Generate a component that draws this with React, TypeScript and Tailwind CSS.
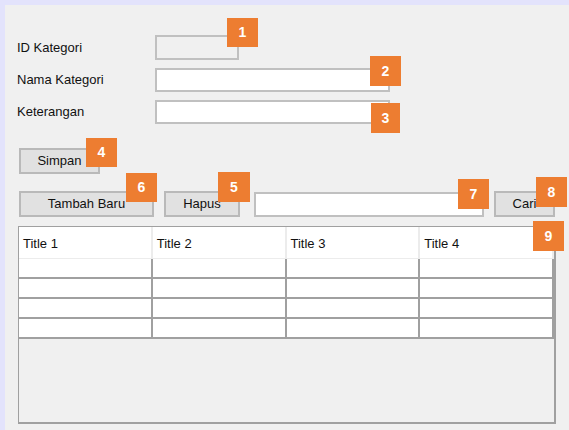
const font = { fontFamily: '"Liberation Sans", Arial, sans-serif' }

type Badge = { n: string; cls: string }

// annotation markers that sit on top of the form
const badges: Badge[] = [
    { n: '1', cls: 'left-[222px] top-[13px] w-[31px] h-[29px]' },
    { n: '2', cls: 'left-[365px] top-[51px] w-[31px] h-[30px]' },
    { n: '3', cls: 'left-[366px] top-[98px] w-[29px] h-[30px]' },
    { n: '4', cls: 'left-[81px] top-[133px] w-[31px] h-[29px]' },
    { n: '5', cls: 'left-[213px] top-[167px] w-[32px] h-[30px]' },
    { n: '6', cls: 'left-[121px] top-[168px] w-[31px] h-[29px]' },
    { n: '7', cls: 'left-[453px] top-[174px] w-[31px] h-[30px]' },
    { n: '8', cls: 'left-[531px] top-[172px] w-[31px] h-[30px]' },
    { n: '9', cls: 'left-[528px] top-[216px] w-[31px] h-[30px]' },
]

const titles = ['Title 1', 'Title 2', 'Title 3', 'Title 4']

function Button({ label, className }: { label: string; className: string }) {
    return (
        <button className={`border-2 border-[#b9b9b9] bg-[#e1e1e1] text-[13px] text-[#111] flex items-center justify-center ${className}`}>
            {label}
        </button>
    )
}

export default function App() {
    return (
        <div className="w-[569px] h-[430px] overflow-hidden bg-[#e3e3fc] pt-[5px] pl-[5px]" style={font}>
            <div className="relative w-full h-full bg-[#f0f0f0] pt-[30px] text-[#111]">
                <div className="grid grid-cols-[138px_auto] gap-y-[8px] pl-[12px] text-[13px]">
                    <div className="flex items-center h-[25px]">ID Kategori</div>
                    <div className="w-[84px] h-[25px] border-2 border-[#c0c0c0] bg-[#f0f0f0]" />
                    <div className="flex items-center h-[24px]">Nama Kategori</div>
                    <div className="w-[235px] h-[24px] border-2 border-[#c0c0c0] bg-white" />
                    <div className="flex items-center h-[24px]">Keterangan</div>
                    <div className="w-[235px] h-[24px] border-2 border-[#c0c0c0] bg-white" />
                </div>

                <div className="pl-[14px] mt-[24px]">
                    <Button label="Simpan" className="w-[81px] h-[26px]" />
                </div>

                <div className="flex items-center pl-[14px] mt-[17px]">
                    <Button label="Tambah Baru" className="w-[135px] h-[26px]" />
                    <Button label="Hapus" className="w-[76px] h-[26px] ml-[10px]" />
                    <div className="w-[230px] h-[25px] ml-[14px] border-2 border-[#c0c0c0] bg-white" />
                    <Button label="Cari" className="w-[61px] h-[26px] ml-[10px]" />
                </div>

                <div className="ml-[13px] mt-[9px] w-[538px] h-[198px] border border-[#a0a0a0] border-b-2 border-r-2 bg-[#f0f0f0]">
                    <div className="grid grid-cols-4 h-[32px] bg-white border-b border-[#ececec]">
                        {titles.map((t) => (
                            <div key={t} className="flex items-center pl-[4px] pt-[3px] text-[13px] border-r-2 border-[#ececec]">
                                {t}
                            </div>
                        ))}
                    </div>
                    {[0, 1, 2, 3].map((r) => (
                        <div key={r} className="grid grid-cols-4 h-[20px] bg-white border-b-2 border-[#a0a0a0]">
                            {[0, 1, 2, 3].map((c) => (
                                <div key={c} className="border-r-2 border-[#a0a0a0]" />
                            ))}
                        </div>
                    ))}
                </div>

                {badges.map((b) => (
                    <div
                        key={b.n}
                        className={`absolute ${b.cls} bg-[#ed7d31] text-white font-bold text-[14px] flex items-center justify-center`}
                    >
                        {b.n}
                    </div>
                ))}
            </div>
        </div>
    )
}
